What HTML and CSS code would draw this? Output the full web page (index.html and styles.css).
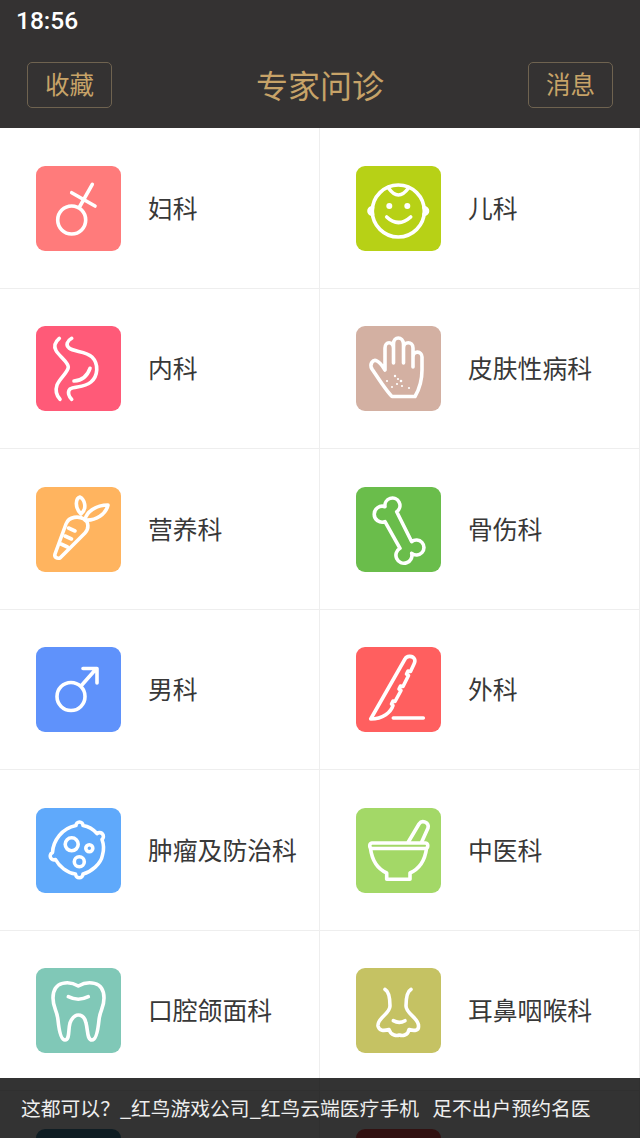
FILE: index.html
```html
<!DOCTYPE html>
<html lang="zh-CN">
<head>
<meta charset="utf-8">
<title>专家问诊</title>
<link rel="stylesheet" href="styles.css">
</head>
<body>
<header class="header">
  <div class="status">18:56</div>
  <nav class="nav">
    <a class="btn">收藏</a>
    <h1 class="title">专家问诊</h1>
    <a class="btn">消息</a>
  </nav>
</header>
<main class="grid">
  <div class="cell"><div class="ic c-fem"><svg viewBox="0 0 85 85"><circle cx="35.7" cy="54" r="14"/><path d="M56.3 18.3L43.5 41M35.7 26.7L59 40"/></svg></div><span class="label">妇科</span></div>
  <div class="cell"><div class="ic c-baby"><svg viewBox="0 0 85 85"><circle cx="42.3" cy="45" r="26"/><path d="M32.5 22Q42.3 36 52.5 22M16.5 41.5Q13 42.5 13 45Q13 47.5 16.5 48.5M68 41.5Q71.5 42.5 71.5 45Q71.5 47.5 68 48.5M30.7 51Q42.3 62 54.7 51"/><circle class="dot" cx="33.3" cy="40" r="3"/><circle class="dot" cx="51.3" cy="40" r="3"/></svg></div><span class="label">儿科</span></div>

  <div class="cell"><div class="ic c-sto"><svg viewBox="0 0 85 85"><path d="M23.3 12.3C19 16 17.5 20 20 24.5C23 30 32.3 36 32.3 41C32.3 46 24 52 21 59C19 65 21 70 24 73.3"/><path d="M35.7 12.3C31 15 29.5 19 33 22C38 26 50 25 56 31C63 38 62 50 55 56C48 62 38 60 34 63C31 66 33 71 35.7 73.3"/><path d="M38 55C44 54.5 51 51 54 42.3"/></svg></div><span class="label">内科</span></div>
  <div class="cell"><div class="ic c-hand"><svg viewBox="0 0 85 85"><path d="M36 70.5C31 66 26 58 16 43C13 38 17 33 21 35C25 37 27 41 29 44V22C29 15 37 15 37.5 22V37V18C37.5 10 47 10 47.5 18V37V22C47.5 15 57 15 57 22V41V31C57 24 66 25 66 31V44C66 55 64 62 59 70.5Z"/><circle class="dot" cx="31" cy="55" r="1.1"/><circle class="dot" cx="39" cy="50" r="1.2"/><circle class="dot" cx="42" cy="53" r="1.1"/><circle class="dot" cx="45" cy="55" r="1.3"/><circle class="dot" cx="41" cy="58" r="1.1"/><circle class="dot" cx="46" cy="60" r="1.1"/><circle class="dot" cx="53" cy="62" r="1.1"/><circle class="dot" cx="36" cy="61" r="1"/></svg></div><span class="label">皮肤性病科</span></div>

  <div class="cell"><div class="ic c-car"><svg viewBox="0 0 85 85"><path d="M24 71C21 72 18 70 19 67L30 37C33 29 43 29 48 32C53 35 53 42 49 46Z"/><path d="M32.5 41L39 44M29 49L35.5 52M25 57L31.5 60"/><path d="M45 27C38 20 40 11 44 10C48 12 52 21 45 27Z"/><path d="M49 33C50 25 60 18 72 18C70 27 60 34 49 33Z"/></svg></div><span class="label">营养科</span></div>
  <div class="cell"><div class="ic c-bone"><svg viewBox="0 0 85 85"><path d="M29 34.7L44 61.3A8 8 0 1 0 55.7 66.3A7.5 7.5 0 1 0 55.7 54.7L40.7 24.7A7.5 7.5 0 1 0 29 19.7A8 8 0 1 0 29 34.7Z"/></svg></div><span class="label">骨伤科</span></div>

  <div class="cell"><div class="ic c-male"><svg viewBox="0 0 85 85"><circle cx="35" cy="49.5" r="14"/><path d="M45 39L60 22M47 21.5H61V36"/></svg></div><span class="label">男科</span></div>
  <div class="cell"><div class="ic c-scal"><svg viewBox="0 0 85 85"><path d="M14.7 72L49 12C51 8 57 9 58.500 12C59.500 14 59 15 58 17L54.500 24.500L52 24L50.500 27L52.500 28.500L47 39.500L44.500 39L43 42L45 43.500L39 54.500L37 54L35.500 57L37 58.500C35 65 27 72 14.700 72Z"/><path d="M37.300 71H67.300"/></svg></div><span class="label">外科</span></div>

  <div class="cell"><div class="ic c-tum"><svg viewBox="0 0 85 85"><path d="M40 17.500A3.300 3.300 0 1 1 47 17.500C53 18.500 57 21 61 25.500A3.300 3.300 0 1 1 66 31.500C68 37 68 42 66.500 47C65 56 55 64 47 66A3.300 3.300 0 1 1 39.500 66C31 65 23 58 19.500 51.500A3.300 3.300 0 1 1 16.500 44.500C17 33 26 20 40 17.500Z"/><circle cx="35.700" cy="36.300" r="6.500"/><circle cx="53.300" cy="40.300" r="3.500"/><circle cx="43.300" cy="53.700" r="5"/></svg></div><span class="label">肿瘤及防治科</span></div>
  <div class="cell"><div class="ic c-bowl"><svg viewBox="0 0 85 85"><path d="M16 35H69.500A2.800 2.800 0 0 1 69.500 40.500H16A2.800 2.800 0 0 1 16 35Z"/><path d="M14.500 40.500C16 52 22 61 30.700 65V71.300H54V65C63 61 69 52 70.500 40.500"/><path d="M52.300 34L63 16A5 5 0 0 1 72 20L65.700 34"/></svg></div><span class="label">中医科</span></div>

  <div class="cell"><div class="ic c-tooth"><svg viewBox="0 0 85 85"><path d="M42.300 18C34 13 17 12 17 30C17 40 21 42 22 52C23 62 25 72 29 72C34 72 32 62 34 55C36 50 39 47 42.300 47C46 47 49 50 50 55C52 62 51 72 56 72C60 72 62 62 63 52C64 42 68 40 68 30C68 12 51 13 42.300 18Z"/><path d="M32.300 28.700Q42.300 33.700 52.300 28.700"/></svg></div><span class="label">口腔颌面科</span></div>
  <div class="cell"><div class="ic c-nose"><svg viewBox="0 0 85 85"><path d="M29 21.300Q34 24 34 38C34 46 21 50 22 58C23 63 28 63 33 61.500C35 68 41 68 43.500 67C46 68 52 68 53 61.500C58 63 63 63 62.500 58C63 50 50 46 50 38Q50 24 55 21.300"/><path d="M37.300 52.700Q43.300 56 49 52.700"/></svg></div><span class="label">耳鼻咽喉科</span></div>

  <div class="cell"><div class="ic c-last1"></div></div>
  <div class="cell"><div class="ic c-last2"></div></div>
</main>
<footer class="banner">这都可以？_红鸟游戏公司_红鸟云端医疗手机&nbsp;&nbsp;&nbsp;足不出户预约名医</footer>
</body>
</html>
```

FILE: styles.css
```css
* { box-sizing: border-box; }
html, body { margin: 0; height: 1138px; overflow: hidden; background: #fff; }
body { position: relative; font-family: "Noto Sans CJK SC", "Noto Sans", sans-serif; color: #333; }

.header { height: 128px; background: #343232; display: flex; flex-direction: column; }
.status { height: 42px; padding-left: 16px; color: #fff; font: 500 24.5px/42px Roboto, sans-serif; }
.nav { display: flex; align-items: center; justify-content: space-between; padding: 20px 27px 20px 27px; height: 86px; }
.title { margin: 0 0 3px; font-size: 32px; font-weight: 400; color: #c7a368; line-height: 46px; }
.btn { width: 85px; height: 46px; border: 1.5px solid #6f6350; border-radius: 5px; color: #c7a368; font-size: 24.5px; line-height: 41px; text-align: center; }

.grid { display: grid; grid-template-columns: 320px 320px; grid-auto-rows: 160.5px; }
.cell { display: flex; align-items: center; gap: 27px; padding: 1px 0 0 36px; border-right: 1px solid #eee; border-bottom: 1px solid #eee; }
.label { font-size: 24.8px; color: #383838; white-space: nowrap; margin-bottom: 3px; }

.ic { width: 85px; height: 85px; flex: none; border-radius: 9px; }
.ic svg { display: block; width: 85px; height: 85px; fill: none; stroke: #fff; stroke-width: 3.6; stroke-linecap: round; stroke-linejoin: round; }
.ic svg .dot { fill: #fff; stroke: none; }

.c-fem { background: #ff7b7b; }
.c-baby { background: #b7d116; }
.c-sto { background: #ff5a78; }
.c-hand { background: #d3b0a2; }
.c-car { background: #ffb45f; }
.c-bone { background: #6abd4b; }
.c-male { background: #5f92fb; }
.c-scal { background: #ff5f5f; }
.c-tum { background: #5fa9fb; }
.c-bowl { background: #a3d867; }
.c-tooth { background: #80c8b7; }
.c-nose { background: #c5c263; }
.c-last1 { background: #4a90b0; }
.c-last2 { background: #f55555; }

.banner { position: absolute; left: 0; right: 0; bottom: 0; height: 60px; padding-left: 21px; background: rgba(0, 0, 0, .8); color: #eee; font-size: 19.8px; line-height: 60px; white-space: nowrap; }
```
